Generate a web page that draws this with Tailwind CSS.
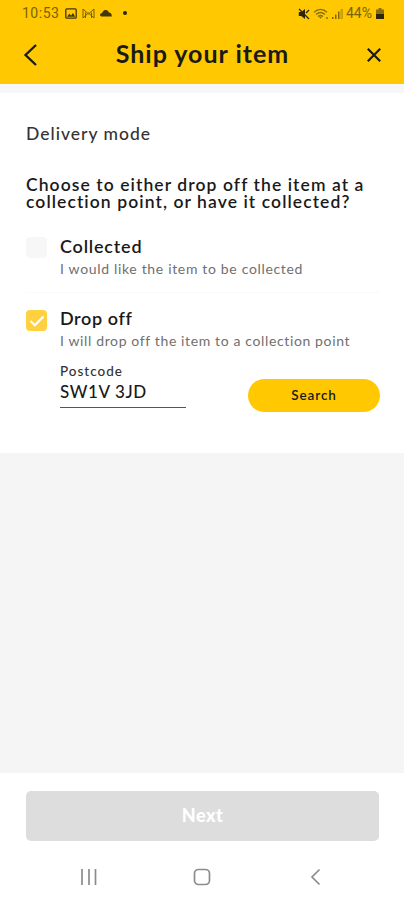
<!doctype html>
<html lang="en">
<head>
    <meta charset="UTF-8">
    <meta name="viewport" content="width=device-width, initial-scale=1.0">
    <title>Ship your item</title>
    <script src="https://cdn.jsdelivr.net/npm/@tailwindcss/browser@4"></script>
</head>
<body class="bg-white font-['Lato',sans-serif] text-[#1a1a1a]">
<div class="flex flex-col w-[404px] h-[900px] overflow-hidden">
    <header class="h-[84px] shrink-0 bg-[#ffc800]">
        <!-- status bar -->
        <div class="flex items-center justify-between h-[27px] pl-[22px] pr-5 font-['Roboto',sans-serif] text-[#7a620a]">
            <div class="flex items-center">
                <span class="w-[37px] text-[14px] tracking-[0.5px]">10:53</span>
                <svg class="ml-1.5 w-3 h-[11px]" viewBox="0 0 12 11" fill="none" stroke="#43370a" stroke-width="1.3">
                    <rect x=".8" y=".8" width="10.4" height="9.4" rx="1"/>
                    <path d="M2 8.8l2.3-3 1.8 1.8L8 5l2.2 3.8z" fill="#43370a" stroke="none"/>
                </svg>
                <svg class="ml-[5px] w-[13px] h-[11px]" viewBox="0 0 13 11" fill="none" stroke="#755e09">
                    <path d="M1 10V1l5.500 5L12 1v9M3.500 10V4.500M9.500 10V4.500M1 10l5.500-5 5.500 5"/>
                </svg>
                <svg class="ml-[5px] -mt-0.5 w-3 h-2" viewBox="0 0 12 8" fill="#43370a">
                    <path d="M1.500 7.500a1.600 1.600 0 0 1 .3-3.200C2.500 3.800 3 1 5.500 1s3 1.600 3.300 2.500c2 0 3 1.500 3 4z"/>
                </svg>
                <span class="ml-[11px] -mt-0.5 size-1 rounded-full bg-[#2e260b]"></span>
            </div>
            <div class="flex items-center">
                <svg class="w-3 h-3" viewBox="0 0 12 12" fill="#2e260b">
                    <path d="M.8 4h2.400L7 1v10L3.200 8H.8z"/>
                    <path d="M1 1l10 10M8 5l3-3" stroke="#2e260b" stroke-width="1.300"/>
                </svg>
                <svg class="ml-[3px] w-4 h-3" viewBox="0 0 16 12" fill="none" stroke="#8a6f0a" stroke-width="1.300">
                    <path d="M1 4.200c4-3.600 9-3.600 13 0M3 6.400c3-2.600 6-2.600 9 0M5 8.500c1.700-1.400 3.300-1.400 5 0"/>
                    <path d="M7.500 10.800L5.800 8.800h3.400z" fill="#8a6f0a" stroke="none"/>
                    <path d="M13 10h2"/>
                </svg>
                <svg class="ml-[3px] w-[11px] h-[11px]" viewBox="0 0 11 11" fill="#806809">
                    <path d="M0 9h1.500v2H0zM3 6.500h1.500V11H3zM6 3.500h1.500V11H6z"/>
                    <path d="M9 1.500h1.300v9H9z" fill="none" stroke="#a78708" stroke-width=".8"/>
                </svg>
                <span class="ml-[3px] w-[28px] text-[14px]">44%</span>
                <svg class="ml-0.5 w-2 h-[11px]" viewBox="0 0 8 11">
                    <path d="M2.500 0h3v1.500H8V11H0V1.500h2.500z" fill="#8a6f0a"/>
                    <path d="M0 6h8v5H0z" fill="#2e260b"/>
                </svg>
            </div>
        </div>
        <div class="flex items-center justify-between h-[56px] pl-[23px] pr-[22px]">
            <svg class="w-4 h-6" viewBox="0 0 16 24" fill="none" stroke="#1a1a1a" stroke-width="2.300">
                <path d="M13 2L2.500 12 13 22"/>
            </svg>
            <h1 class="-mt-0.5 text-[25px] font-bold tracking-[1px] whitespace-nowrap">Ship your item</h1>
            <svg class="w-4 h-4" viewBox="0 0 16 16" fill="none" stroke="#1a1a1a" stroke-width="2.200">
                <path d="M1.800 1.800l12.400 12.400M14.200 1.800L1.800 14.200"/>
            </svg>
        </div>
    </header>

    <div class="h-[9px] shrink-0 bg-[#f7f7f7]"></div>

    <main class="h-[360px] shrink-0 pl-[26px] pr-6 pt-[29px]">
        <h2 class="h-6 text-[17.500px] leading-6 font-medium tracking-[1px] text-[#333333]">Delivery mode</h2>
        <p class="mt-[30px] text-[17.500px] leading-[17px] font-semibold tracking-[1.080px] whitespace-nowrap">Choose to either drop off the item at a<br>collection point, or have it collected?</p>

        <div class="flex mt-[26px] h-[57px] border-b border-[#fafafa]">
            <span class="size-[21px] mt-px rounded bg-[#f7f7f7]"></span>
            <div class="ml-[13px] whitespace-nowrap">
                <p class="text-[18px] leading-[21px] font-semibold tracking-[0.8px]">Collected</p>
                <p class="mt-[3px] text-[14px] leading-[17px] tracking-[0.670px] text-[#707070]">I would like the item to be collected</p>
            </div>
        </div>

        <div class="flex mt-[15px]">
            <span class="flex items-center justify-center size-[21px] mt-0.5 rounded bg-[#ffd140]">
                <svg class="w-4 h-3" viewBox="0 0 16 12" fill="none" stroke="white" stroke-width="2">
                    <path d="M1.500 6l4.300 4.300L14.500 1.500"/>
                </svg>
            </span>
            <div class="ml-[13px] whitespace-nowrap">
                <p class="text-[18px] leading-[21px] font-semibold tracking-[0.6px]">Drop off</p>
                <p class="mt-[3px] text-[14px] leading-[17px] tracking-[0.630px] text-[#707070]">I will drop off the item to a collection point</p>
            </div>
        </div>

        <div class="flex justify-between pl-[34px] mt-[13px]">
            <div class="w-[126px] h-[46px] border-b border-[#555555]">
                <label for="postcode" class="block mt-px text-[13.500px] leading-4 font-medium tracking-[1px] text-[#333333]">Postcode</label>
                <input id="postcode" type="text" value="SW1V 3JD" class="block mt-0.5 w-full h-[22px] text-[17px] font-medium tracking-[0.6px] outline-none">
            </div>
            <button class="mt-[17px] w-[132px] h-[33px] rounded-full bg-[#ffc800] text-[13.500px] font-semibold tracking-[0.9px]">Search</button>
        </div>
    </main>

    <div class="h-[320px] shrink-0 bg-[#f5f5f5]"></div>

    <footer class="pl-[26px] pr-[25px] pt-[18px]">
        <button class="block w-[353px] h-[50px] rounded-[5px] bg-[#dddddd] pb-0.5 text-[18px] font-black tracking-[0.5px] text-white">Next</button>
        <nav class="flex items-center mt-[25px] h-[22px] pl-[54px]">
            <svg class="w-[18px] h-[18px]" viewBox="0 0 18 18" fill="none" stroke="#8c8c8c" stroke-width="1.700">
                <path d="M2 1v16M9 1v16M15.500 1v16"/>
            </svg>
            <svg class="ml-[95px] w-[18px] h-[18px]" viewBox="0 0 18 18" fill="none" stroke="#8c8c8c" stroke-width="1.700">
                <rect x="1.500" y="1.500" width="15" height="15" rx="4"/>
            </svg>
            <svg class="ml-[99px] w-[11px] h-[18px]" viewBox="0 0 11 18" fill="none" stroke="#8c8c8c" stroke-width="1.700">
                <path d="M9.500 1.500L2 9l7.500 7.500"/>
            </svg>
        </nav>
    </footer>
</div>
</body>
</html>
